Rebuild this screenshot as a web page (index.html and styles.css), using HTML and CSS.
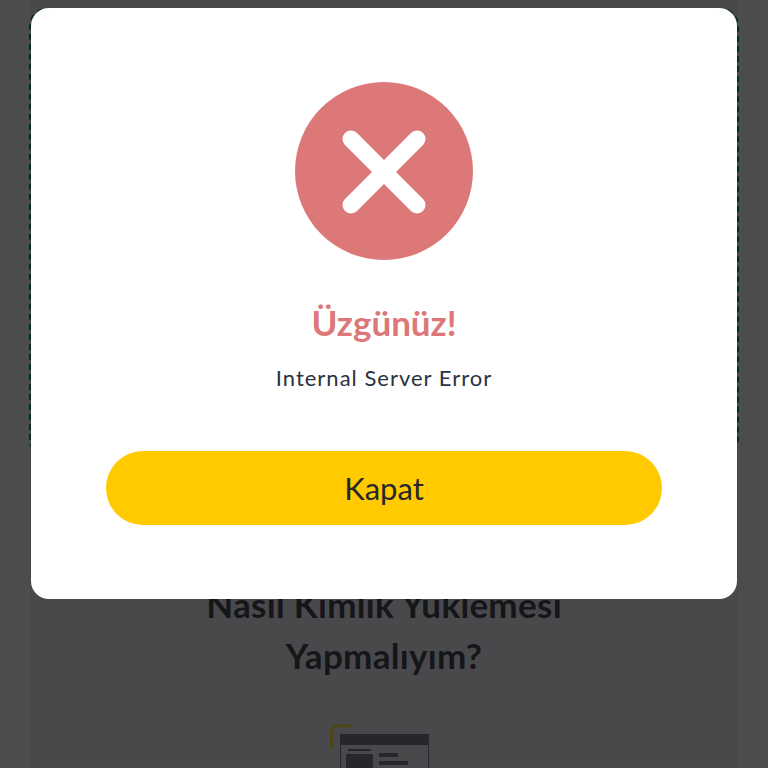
FILE: index.html
```html
<!DOCTYPE html>
<html lang="tr">
<head>
    <meta charset="UTF-8">
    <meta name="viewport" content="width=device-width, initial-scale=1.0">
    <title>Kimlik Yükleme</title>
    <link rel="stylesheet" href="styles.css">
</head>
<body>
    <div class="page">
        <div class="upload-box"></div>
        <h2 class="help-title">Nasıl Kimlik Yüklemesi Yapmalıyım?</h2>
        <svg class="help-img" width="108" height="44" viewBox="0 0 108 44">
            <path d="M1.5 25V6a4 4 0 0 1 4-4H22" fill="none" stroke="#ffee55" stroke-width="3"/>
            <rect x="10.5" y="10.5" width="88" height="40" fill="#f4f6fa" stroke="#7c8290" stroke-width="1"/>
            <rect x="10" y="10" width="89" height="11" fill="#7c8290"/>
            <rect x="18" y="25" width="23" height="2" fill="#7c8290"/>
            <rect x="16" y="30" width="27" height="14" fill="#7c8290"/>
            <rect x="49" y="29" width="19" height="4" fill="#7c8290"/>
            <rect x="49" y="37" width="29" height="4" fill="#7c8290"/>
        </svg>
    </div>

    <div class="overlay">
        <div class="modal">
            <svg class="modal-icon" width="178" height="178" viewBox="0 0 178 178">
                <circle cx="89" cy="89" r="89" fill="#dd7878"/>
                <path d="M56 57L122 123M122 57L56 123" stroke="#fff" stroke-width="17" stroke-linecap="round"/>
            </svg>
            <h3 class="modal-title">Üzgünüz!</h3>
            <p class="modal-text">Internal Server Error</p>
            <button class="modal-btn">Kapat</button>
        </div>
    </div>
</body>
</html>
```

FILE: styles.css
```css
html, body {
    height: 100%;
    margin: 0;
    overflow: hidden;
}
body {
    background-color: #fff;
    font-family: Lato, "Noto Sans", sans-serif;
}
.page {
    margin: 0 30px;
    height: 768px;
    background-color: #f4f6fa;
    display: flex;
    flex-direction: column;
    align-items: center;
    padding-top: 8px;
    box-sizing: border-box;
}
.upload-box {
    width: 710px;
    height: 450px;
    box-sizing: border-box;
    border: 2px dashed #00a651;
    border-radius: 18px;
    flex-shrink: 0;
}
.help-title {
    width: 420px;
    margin: 121px 0 0;
    font-size: 35px;
    line-height: 51px;
    font-weight: 700;
    letter-spacing: 0.3px;
    text-align: center;
    color: #484c57;
}
.help-img {
    margin-top: 43px;
    flex-shrink: 0;
}
.overlay {
    position: fixed;
    top: 0;
    left: 0;
    right: 0;
    bottom: 0;
    background: rgba(0, 0, 0, 0.7);
    display: flex;
    justify-content: center;
    align-items: flex-start;
    padding-top: 8px;
}
.modal {
    width: 706px;
    box-sizing: border-box;
    background-color: #fff;
    border-radius: 18px;
    padding: 74px 75px;
    display: flex;
    flex-direction: column;
    align-items: center;
}
.modal-icon {
    display: block;
}
.modal-title {
    margin: 40px 0 0;
    font-size: 35px;
    line-height: 44px;
    font-weight: 700;
    color: #dd7878;
}
.modal-text {
    margin: 19px 0 0;
    font-size: 22px;
    line-height: 30px;
    letter-spacing: 1px;
    color: #2b3240;
}
.modal-btn {
    margin-top: 58px;
    width: 100%;
    height: 74px;
    border: none;
    border-radius: 37px;
    background-color: #ffcb00;
    color: #26282e;
    font-family: inherit;
    font-size: 31px;
}
```
